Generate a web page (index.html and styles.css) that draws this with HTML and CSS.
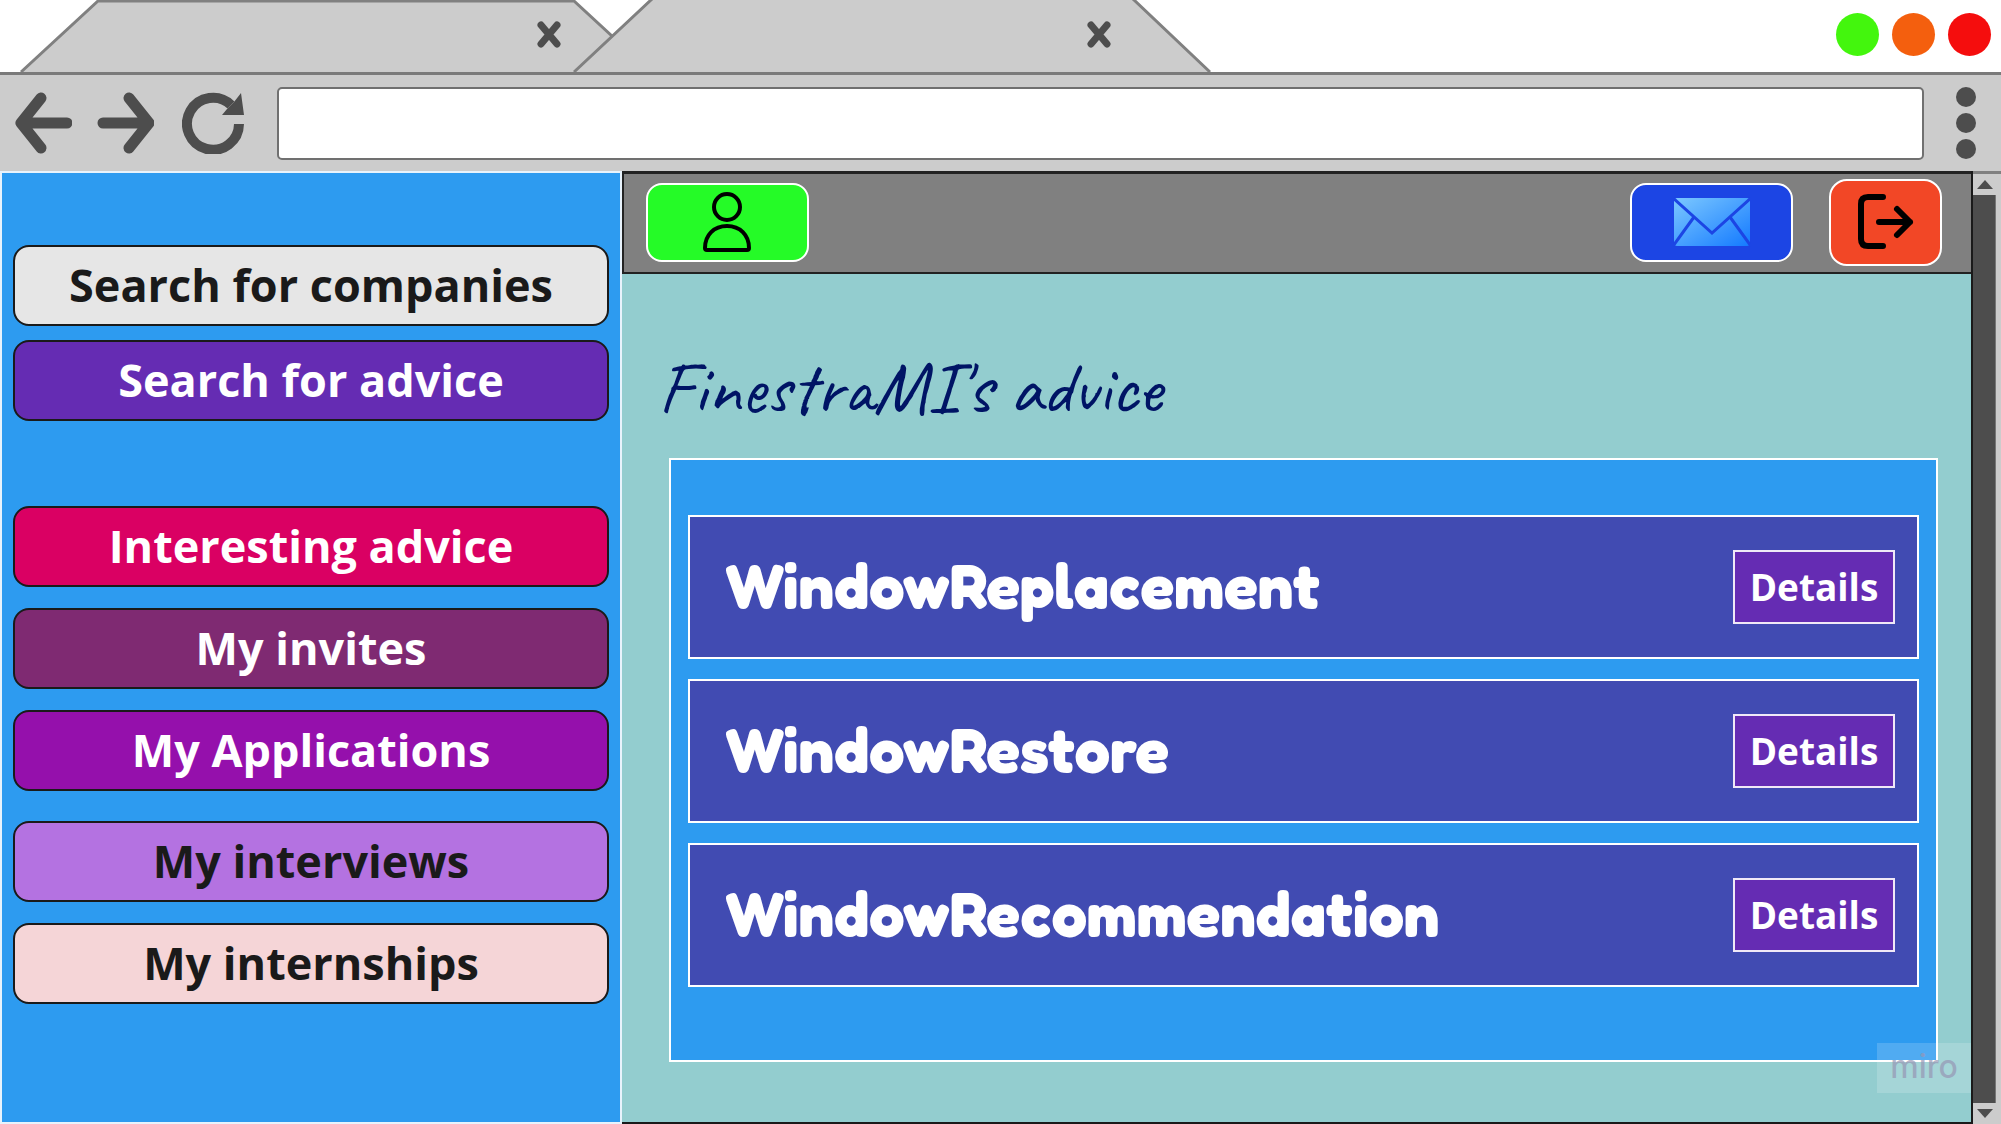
FILE: index.html
```html
<!DOCTYPE html>
<html lang="en">
<head>
<meta charset="utf-8">
<title>FinestraMI's advice</title>
<link rel="stylesheet" href="styles.css">
</head>
<body>
<div class="window">
  <header class="tabstrip">
    <div class="tab tab-back">
      <svg class="tab-shape" viewBox="0 0 632 74" preserveAspectRatio="none" aria-hidden="true"><path d="M1 74L78 1H554L631 74"/></svg>
      <button class="tab-close" aria-label="Close tab"><svg viewBox="0 0 24 32"><path d="M4 7L20 26M20 7L4 26"/></svg></button>
    </div>
    <div class="tab tab-front">
      <svg class="tab-shape" viewBox="0 0 638 74" preserveAspectRatio="none" aria-hidden="true"><path d="M1 74L80 -2H559L637 74"/></svg>
      <button class="tab-close" aria-label="Close tab"><svg viewBox="0 0 24 32"><path d="M4 7L20 26M20 7L4 26"/></svg></button>
    </div>
    <div class="lights">
      <button class="light light-green" aria-label="Minimize"></button>
      <button class="light light-orange" aria-label="Maximize"></button>
      <button class="light light-red" aria-label="Close"></button>
    </div>
  </header>

  <div class="toolbar">
    <button class="tool" aria-label="Back"><svg viewBox="0 0 58 62"><path class="arrow" d="M27 6L7 31L27 56M7 31H53"/></svg></button>
    <button class="tool" aria-label="Forward"><svg viewBox="0 0 58 62"><path class="arrow" d="M33 6L53 31L33 56M53 31H7"/></svg></button>
    <button class="tool tool-reload" aria-label="Reload"><svg viewBox="0 0 64 62"><path class="arc" d="M57 32A26 26 0 1 1 49 13"/><path class="head" d="M59 1L62 23H40L45 17L52 10Z"/></svg></button>
    <input class="address" type="text" aria-label="Address">
    <button class="more" aria-label="Menu"><svg viewBox="0 0 20 72"><circle cx="10" cy="10" r="10"/><circle cx="10" cy="36" r="10"/><circle cx="10" cy="62" r="10"/></svg></button>
  </div>

  <div class="page">
    <nav class="sidebar">
      <div class="group group-search">
        <button class="nav nav-companies">Search for companies</button>
        <button class="nav nav-advice">Search for advice</button>
      </div>
      <div class="group">
        <button class="nav nav-interesting">Interesting advice</button>
        <button class="nav nav-invites">My invites</button>
        <button class="nav nav-applications">My Applications</button>
      </div>
      <div class="group">
        <button class="nav nav-interviews">My interviews</button>
        <button class="nav nav-internships">My internships</button>
      </div>
    </nav>

    <main class="content">
      <div class="topbar">
        <button class="action action-user" aria-label="Profile">
          <svg width="50" height="62" viewBox="0 0 50 62"><ellipse cx="24" cy="16" rx="13" ry="13"/><path d="M2 57C2 44 11 35 24 35S46 44 46 57Q46 59 44 59H4Q2 59 2 57Z"/></svg>
        </button>
        <button class="action action-mail" aria-label="Messages">
          <svg width="78" height="50" viewBox="0 0 78 50">
            <defs><linearGradient id="mail" x1="0" y1="0" x2="1" y2="1"><stop offset="0" stop-color="#7cc8ff"/><stop offset="1" stop-color="#147aff"/></linearGradient></defs>
            <rect x="1" y="1" width="76" height="48" rx="3" fill="url(#mail)"/>
            <path d="M0 1L39 36L78 1M0 49L21 20M78 49L57 20"/>
          </svg>
        </button>
        <button class="action action-exit" aria-label="Log out">
          <svg width="60" height="58" viewBox="0 0 60 58"><path d="M27 4H12Q5 4 5 11V46Q5 53 12 53H27M23 29H54M41 16L54 29L41 42"/></svg>
        </button>
      </div>

      <h1 class="title">FinestraMI's advice</h1>

      <section class="panel">
        <article class="card"><h2 class="card-title">WindowReplacement</h2><button class="details">Details</button></article>
        <article class="card"><h2 class="card-title">WindowRestore</h2><button class="details">Details</button></article>
        <article class="card"><h2 class="card-title">WindowRecommendation</h2><button class="details">Details</button></article>
      </section>
      <div class="watermark">miro</div>
    </main>

    <div class="scrollbar">
      <button class="scroll-end" aria-label="Scroll up"><svg viewBox="0 0 16 9"><path d="M8 0L16 9H0Z"/></svg></button>
      <div class="thumb"></div>
      <button class="scroll-end" aria-label="Scroll down"><svg viewBox="0 0 16 9"><path d="M8 9L0 0H16Z"/></svg></button>
    </div>
  </div>
</div>
</body>
</html>
```

FILE: styles.css
```css
* {
  box-sizing: border-box;
}

body {
  margin: 0;
  background: #fff;
  color: #1a1a1a;
  font-family: "Open Sans", "Noto Sans", sans-serif;
}

button {
  margin: 0;
  padding: 0;
  border: 0;
  background: none;
  color: inherit;
  font: inherit;
}

svg {
  display: block;
}

.window {
  display: flex;
  flex-direction: column;
  min-height: 100vh;
}

/* Browser chrome */
.tabstrip {
  display: flex;
  height: 72px;
  padding: 0 10px 0 20px;
}

.tab {
  position: relative;
  display: flex;
  align-items: center;
  justify-content: flex-end;
  height: 72px;
}

.tab-back {
  width: 632px;
  padding-right: 91px;
}

.tab-front {
  width: 638px;
  margin-left: -79px;
  padding-right: 100px;
}

.tab-shape {
  position: absolute;
  inset: 0;
  width: 100%;
  height: 100%;
  fill: #ccc;
  stroke: #808080;
  stroke-width: 3px;
}

.tab-close {
  position: relative;
  width: 24px;
  height: 32px;
  margin-bottom: 4px;
}

.tab-close path {
  fill: none;
  stroke: #4d4d4d;
  stroke-width: 7px;
  stroke-linecap: round;
}

.lights {
  display: flex;
  align-items: center;
  gap: 13px;
  height: 68px;
  margin-left: auto;
}

.light {
  width: 43px;
  height: 43px;
  border-radius: 50%;
}

.light-green { background: #43f60d; }
.light-orange { background: #f45f0e; }
.light-red { background: #f50d0d; }

.toolbar {
  display: flex;
  align-items: center;
  height: 99px;
  padding: 0 25px 0 14px;
  border-top: 3px solid #7a7a7a;
  background: #ccc;
}

.tool {
  width: 58px;
  height: 62px;
  margin-right: 24px;
}

.tool-reload {
  width: 64px;
  margin: 0 31px 0 4px;
}

.arrow,
.arc {
  fill: none;
  stroke: #4d4d4d;
}

.arrow {
  stroke-width: 11px;
  stroke-linecap: round;
  stroke-linejoin: round;
}

.arc {
  stroke-width: 10px;
}

.head,
.more,
.scroll-end {
  fill: #4d4d4d;
}

.address {
  flex: 1;
  min-width: 0;
  height: 73px;
  padding: 0 16px;
  border: 2px solid #707070;
  border-radius: 5px;
  background: #fff;
  font: 32px "Open Sans", sans-serif;
}

.more {
  width: 20px;
  height: 72px;
  margin-left: 32px;
}

/* Page area */
.page {
  display: grid;
  grid-template-columns: minmax(0, 622fr) minmax(0, 1351fr) 28px;
  flex: 1;
}

.sidebar {
  display: flex;
  flex-direction: column;
  padding: 72px 11px 32px;
  border: 2px solid #e8f3fc;
  background: #2d9bf0;
}

.group {
  display: flex;
  flex-direction: column;
  gap: 21px;
  margin-bottom: 30px;
}

.group-search {
  gap: 14px;
  margin-bottom: 85px;
}

.nav {
  height: 81px;
  padding-bottom: 1px;
  border: 2px solid #1a1a1a;
  border-radius: 16px;
  color: #fff;
  font-size: 45px;
  font-weight: 700;
  line-height: 64px;
}

.nav-companies { background: #e6e6e6; color: #1a1a1a; }
.nav-advice { background: #652cb3; }
.nav-interesting { background: #da0063; }
.nav-invites { background: #7f2a72; }
.nav-applications { background: #9510ac; }
.nav-interviews { background: #b472e1; color: #1a1a1a; }
.nav-internships { background: #f5d5d7; color: #1a1a1a; }

.content {
  position: relative;
  display: flex;
  flex-direction: column;
  border: 2px solid #1a1a1a;
  border-top: 0;
  border-left: 0;
  background: #93cdcf;
}

.topbar {
  display: flex;
  align-items: center;
  height: 103px;
  padding: 0 29px 2px 22px;
  border: 2px solid #222;
  border-top-width: 3px;
  border-right: 0;
  background: #808080;
}

.action {
  display: flex;
  align-items: center;
  justify-content: center;
  width: 163px;
  height: 79px;
  border: 2px solid #fff;
  border-radius: 16px;
}

.action path,
.action ellipse {
  fill: none;
  stroke: #000;
  stroke-width: 4px;
}

.action-user {
  background: #25fb27;
}

.action-mail {
  margin-left: auto;
  background: #1c45e4;
}

.action-mail path {
  stroke: #1c45e4;
  stroke-width: 3px;
}

.action-exit {
  width: 113px;
  height: 87px;
  margin-left: 36px;
  border-radius: 18px;
  background: #f24726;
}

.action-exit path {
  stroke-width: 6px;
  stroke-linecap: round;
  stroke-linejoin: round;
}

.title {
  margin: 74px 0 0 36px;
  color: #001465;
  font-family: "Caveat", "Lato", sans-serif;
  font-size: 75px;
  font-weight: 400;
  line-height: 80px;
}

.panel {
  display: flex;
  flex-direction: column;
  gap: 20px;
  margin: 30px 33px 60px 47px;
  padding: 55px 17px 73px;
  border: 2px solid #fff;
  background: #2d9bf0;
}

.card {
  display: flex;
  align-items: center;
  justify-content: space-between;
  height: 144px;
  padding: 0 22px 0 35px;
  border: 2px solid #fff;
  background: #414bb2;
  color: #fff;
}

.card-title {
  margin: 0;
  padding-bottom: 4px;
  font-family: "Fredoka One", "Fredoka", "Lato", sans-serif;
  font-size: 63px;
  font-weight: 900;
  font-variant-ligatures: none;
  line-height: 72px;
}

.details {
  width: 162px;
  height: 74px;
  padding-bottom: 1px;
  border: 2px solid #f0e9f7;
  background: #652cb3;
  font-size: 37px;
  font-weight: 700;
}

.watermark {
  position: absolute;
  right: 0;
  bottom: 29px;
  width: 94px;
  height: 50px;
  background: rgba(255, 255, 255, 0.17);
  color: rgba(150, 150, 180, 0.7);
  font: 500 32px/48px "Inter", sans-serif;
  text-align: center;
}

.scrollbar {
  display: flex;
  flex-direction: column;
  padding-right: 5px;
  border-top: 3px solid #808080;
  background: #ccc;
}

.scroll-end {
  display: flex;
  align-items: center;
  justify-content: center;
  height: 21px;
}

.scroll-end svg {
  width: 16px;
  height: 9px;
}

.thumb {
  flex: 1;
  border-right: 1px solid #777;
  background: #4d4d4d;
}
```
